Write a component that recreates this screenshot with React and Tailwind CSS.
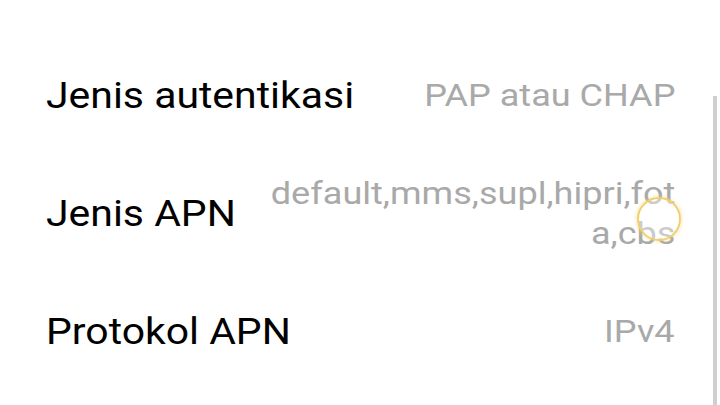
export default function App() {
  const rows = [
    { label: "Jenis autentikasi", value: ["PAP atau CHAP"] },
    { label: "Jenis APN", value: ["default,mms,supl,hipri,fot", "a,cbs"] },
    { label: "Protokol APN", value: ["IPv4"] },
  ];
  return (
    <div
      className="relative w-[720px] h-[405px] bg-white overflow-hidden"
      style={{ fontFamily: "Roboto, 'Noto Sans', sans-serif" }}
    >
      <div className="flex flex-col pt-[37px] pl-[46px] pr-[45px]">
        {rows.map((r) => (
          <div key={r.label} className="flex items-center justify-between h-[118px] gap-4">
            <div className="text-[36px] leading-[44px] text-black whitespace-nowrap origin-left scale-x-[1.137]">
              {r.label}
            </div>
            <div className="text-[31.5px] leading-[40px] text-[#a9a9a9] text-right origin-right scale-x-[1.145]">
              {r.value.map((v) => (
                <div key={v}>{v}</div>
              ))}
            </div>
          </div>
        ))}
      </div>
      <div className="absolute left-[713px] top-[96px] w-[4px] h-[320px] bg-[#cfcfcf]" />
      <div className="absolute left-[637px] top-[197px] w-[44px] h-[44px] rounded-full border-[2.5px] border-[#f2cf6c] bg-white/40 shadow-[0_0_4px_rgba(242,207,108,0.7)]" />
    </div>
  );
}
